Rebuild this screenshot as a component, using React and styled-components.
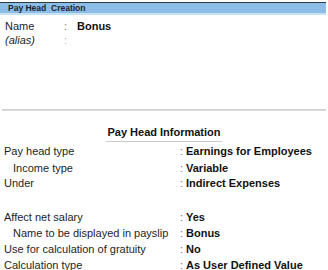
import React from 'react';
import styled, { createGlobalStyle } from 'styled-components';

const GlobalStyle = createGlobalStyle`
  html, body {
    margin: 0;
    padding: 0;
    background: #ffffff;
  }
  body {
    font-family: "Liberation Sans", Arial, sans-serif;
    color: #1e1e1e;
  }
`;

const Screen = styled.div`
  width: 328px;
  height: 270px;
  overflow: hidden;
  background: #ffffff;
`;

const TitleBar = styled.div`
  margin: 2px 2px 0 0;
  height: 10px;
  border-top: 1px solid #2e3c44;
  border-bottom: 2px solid #c6e0f4;
  background: #8bbde6;
  display: flex;
  align-items: center;
  padding-left: 8px;
  font-size: 8.5px;
  font-weight: bold;
  color: #1b2430;
  white-space: pre;
`;

const TopFields = styled.div`
  padding: 4px 0 0 5px;
`;

const TopRow = styled.div`
  display: grid;
  grid-template-columns: 59px 13px auto;
  font-size: 11px;
  line-height: 14px;
`;

const TopLabel = styled.span`
  font-style: ${(p) => (p.italic ? 'italic' : 'normal')};
`;

const Colon = styled.span`
  color: ${(p) => p.faint ? '#b0b0b0' : '#7a7a7a'};
`;

const Value = styled.span`
  font-weight: bold;
  color: #111111;
`;

const Separator = styled.div`
  margin: 62px 2px 0 2px;
  height: 2px;
  background: #dcdcdc;
  border-top: 1px solid #d0d0d0;
  box-sizing: border-box;
`;

const SectionHead = styled.div`
  display: flex;
  justify-content: center;
  padding-top: 14px;
`;

const HeadText = styled.span`
  font-size: 11px;
  font-weight: bold;
  line-height: 14px;
  color: #111111;
  padding: 0 1px 2px 1px;
  border-bottom: 1px solid #cccccc;
`;

const Fields = styled.div`
  padding: 1px 0 0 4px;
`;

const Row = styled.div`
  display: grid;
  grid-template-columns: 176px 6px auto;
  font-size: 11px;
  line-height: ${(p) => p.tall ? '14px' : '16px'};
  padding-top: ${(p) => p.tall ? '2px' : '0'};
  margin-top: ${(p) => p.gap || '0'};
`;

const Label = styled.span`
  padding-left: ${(p) => (p.indent ? '9px' : '0')};
  white-space: nowrap;
`;

const infoRows = [
  { label: 'Pay head type', value: 'Earnings for Employees' },
  { label: 'Income type', value: 'Variable', indent: true, tall: true },
  { label: 'Under', value: 'Indirect Expenses' },
  { label: 'Affect net salary', value: 'Yes', gap: '18px' },
  { label: 'Name to be displayed in payslip', value: 'Bonus', indent: true },
  { label: 'Use for calculation of gratuity', value: 'No' },
  { label: 'Calculation type', value: 'As User Defined Value' },
];

const App = () => {
  return (
    <>
      <GlobalStyle />
      <Screen>
        <TitleBar>{'Pay Head  Creation'}</TitleBar>
        <TopFields>
          <TopRow>
            <TopLabel>Name</TopLabel>
            <Colon>:</Colon>
            <Value>Bonus</Value>
          </TopRow>
          <TopRow>
            <TopLabel italic>(alias)</TopLabel>
            <Colon faint>:</Colon>
            <span />
          </TopRow>
        </TopFields>
        <Separator />
        <SectionHead>
          <HeadText>Pay Head Information</HeadText>
        </SectionHead>
        <Fields>
          {infoRows.map((r) => (
            <Row key={r.label} tall={r.tall} gap={r.gap}>
              <Label indent={r.indent}>{r.label}</Label>
              <Colon>:</Colon>
              <Value>{r.value}</Value>
            </Row>
          ))}
        </Fields>
      </Screen>
    </>
  );
};

export default App;
